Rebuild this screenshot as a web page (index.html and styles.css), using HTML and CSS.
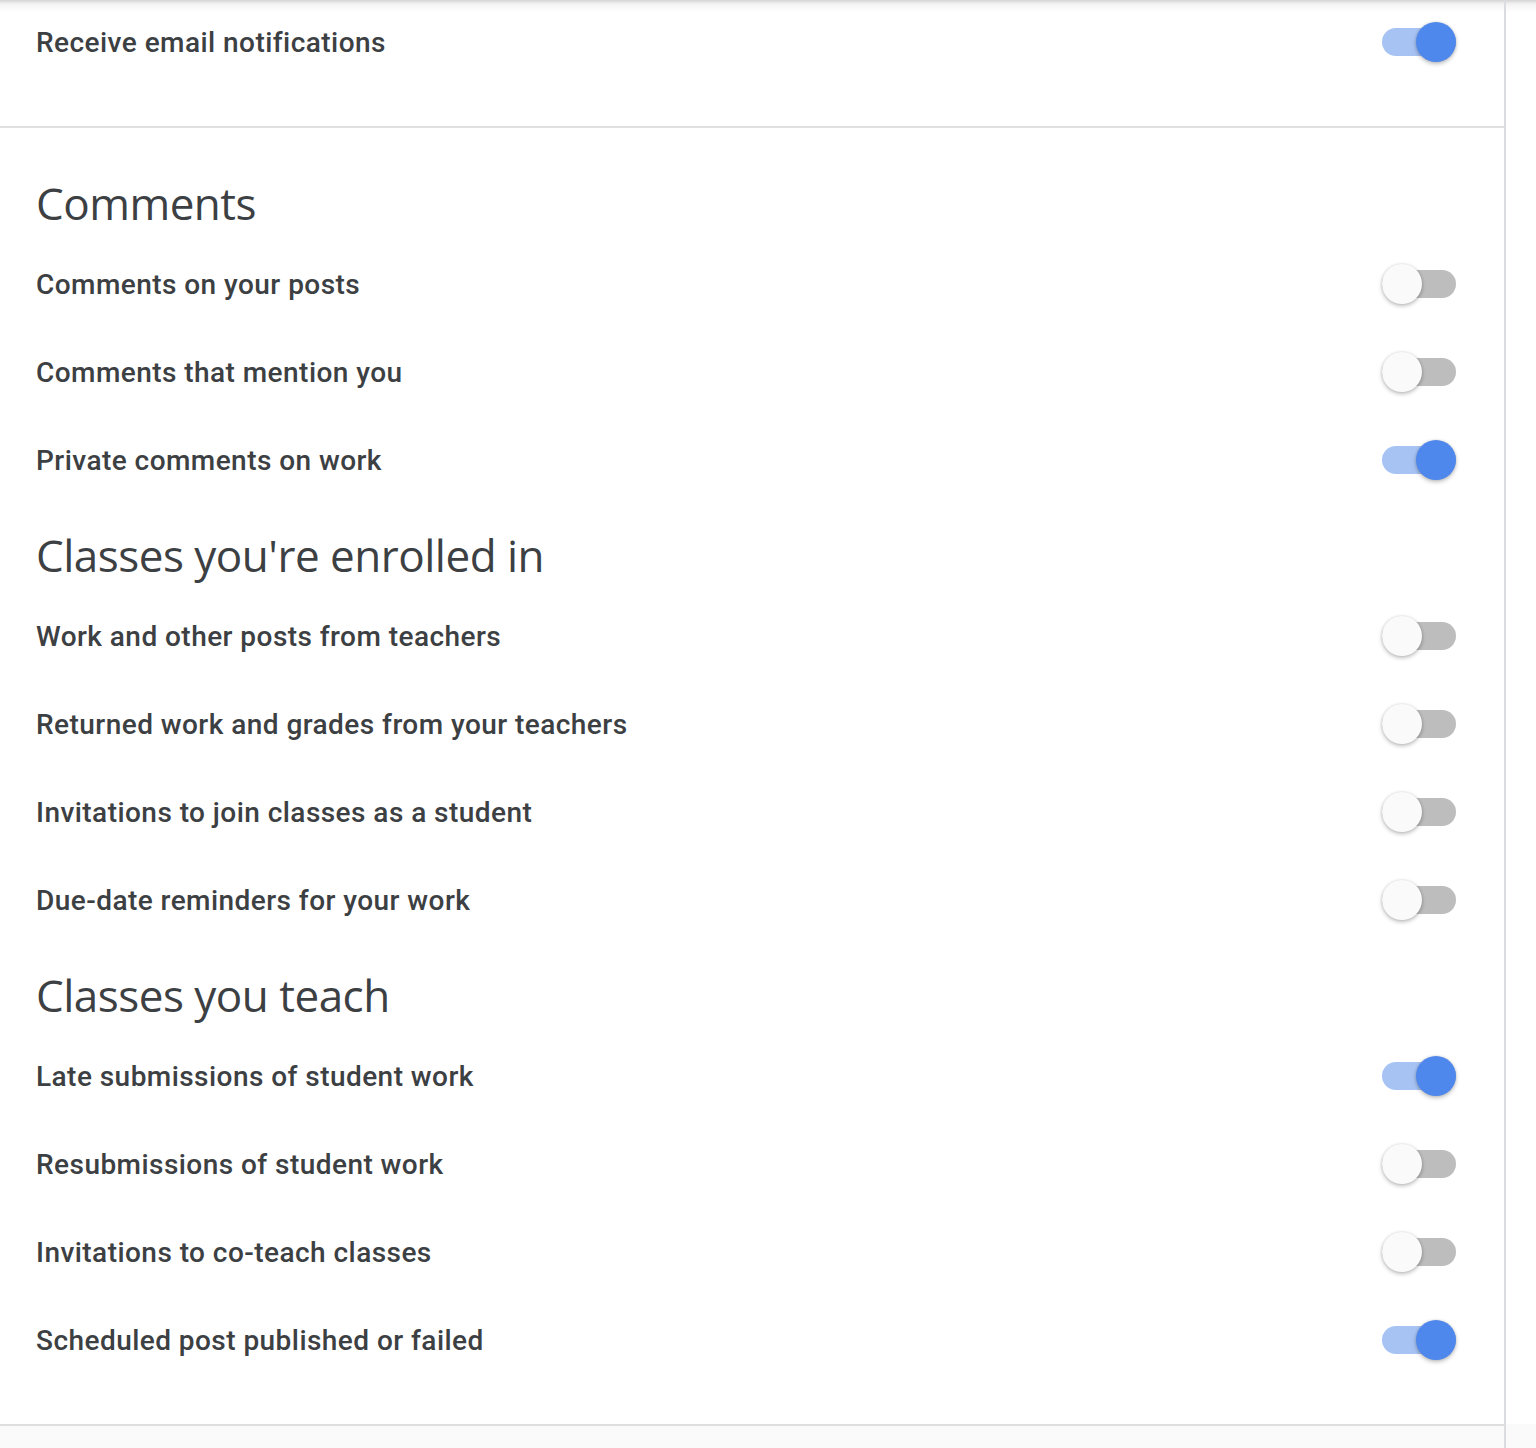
FILE: index.html
```html
<!DOCTYPE html>
<html lang="en">
<head>
<meta charset="utf-8">
<title>Notification settings</title>
<link rel="stylesheet" href="styles.css">
</head>
<body>
<div class="page">
  <div class="main-row">
    <main class="panel">
      <section class="top-section">
        <div class="row">
          <span class="label">Receive email notifications</span>
          <span class="toggle on"><span class="track"></span><span class="thumb"></span></span>
        </div>
      </section>
      <section class="groups">
        <div class="group">
          <h2 class="heading">Comments</h2>
          <div class="row">
            <span class="label">Comments on your posts</span>
            <span class="toggle"><span class="track"></span><span class="thumb"></span></span>
          </div>
          <div class="row">
            <span class="label">Comments that mention you</span>
            <span class="toggle"><span class="track"></span><span class="thumb"></span></span>
          </div>
          <div class="row">
            <span class="label">Private comments on work</span>
            <span class="toggle on"><span class="track"></span><span class="thumb"></span></span>
          </div>
        </div>
        <div class="group">
          <h2 class="heading">Classes you're enrolled in</h2>
          <div class="row">
            <span class="label">Work and other posts from teachers</span>
            <span class="toggle"><span class="track"></span><span class="thumb"></span></span>
          </div>
          <div class="row">
            <span class="label">Returned work and grades from your teachers</span>
            <span class="toggle"><span class="track"></span><span class="thumb"></span></span>
          </div>
          <div class="row">
            <span class="label">Invitations to join classes as a student</span>
            <span class="toggle"><span class="track"></span><span class="thumb"></span></span>
          </div>
          <div class="row">
            <span class="label">Due-date reminders for your work</span>
            <span class="toggle"><span class="track"></span><span class="thumb"></span></span>
          </div>
        </div>
        <div class="group">
          <h2 class="heading">Classes you teach</h2>
          <div class="row">
            <span class="label">Late submissions of student work</span>
            <span class="toggle on"><span class="track"></span><span class="thumb"></span></span>
          </div>
          <div class="row">
            <span class="label">Resubmissions of student work</span>
            <span class="toggle"><span class="track"></span><span class="thumb"></span></span>
          </div>
          <div class="row">
            <span class="label">Invitations to co-teach classes</span>
            <span class="toggle"><span class="track"></span><span class="thumb"></span></span>
          </div>
          <div class="row">
            <span class="label">Scheduled post published or failed</span>
            <span class="toggle on"><span class="track"></span><span class="thumb"></span></span>
          </div>
        </div>
      </section>
    </main>
    <div class="side"></div>
  </div>
  <div class="bottom-row">
    <div class="bottom-panel"></div>
    <div class="bottom-side"></div>
  </div>
</div>
</body>
</html>
```
FILE: styles.css
```css
html, body {
  margin: 0;
  padding: 0;
}
body {
  background: #ffffff;
  font-family: Roboto, "Liberation Sans", Arial, sans-serif;
  color: #3c4043;
}
.page {
  display: flex;
  flex-direction: column;
  min-height: 1448px;
  background: linear-gradient(#d4d4d6 0px, #f3f3f4 4px, #ffffff 12px);
}
.main-row {
  display: flex;
}
.panel {
  width: 1504px;
  border-right: 2px solid #dadce0;
  flex: none;
}
.side {
  flex: 1;
}
.top-section {
  padding-bottom: 42px;
  border-bottom: 2px solid #e0e0e0;
}
.top-section .row {
  height: 84px;
}
.groups {
  padding-top: 24px;
  padding-bottom: 40px;
}
.heading {
  margin: 25px 0 11px 0;
  padding-left: 36px;
  height: 52px;
  line-height: 52px;
  font-family: "Open Sans", "Noto Sans", sans-serif;
  font-weight: 400;
  font-size: 44px;
  letter-spacing: -0.5px;
  color: #3c4043;
}
.row {
  height: 88px;
  display: flex;
  align-items: center;
  justify-content: space-between;
  padding-left: 36px;
  padding-right: 48px;
}
.label {
  font-family: Roboto, "Liberation Sans", sans-serif;
  font-weight: 500;
  font-size: 28px;
  letter-spacing: 0.45px;
  color: #3c4043;
}
.toggle {
  position: relative;
  width: 74px;
  height: 40px;
  display: flex;
  align-items: center;
  flex: none;
}
.track {
  width: 74px;
  height: 28px;
  border-radius: 14px;
  background: #bdbdbd;
}
.thumb {
  position: absolute;
  top: 0;
  left: 0;
  width: 40px;
  height: 40px;
  border-radius: 50%;
  background: #fafafa;
  box-shadow: 0 2px 4px rgba(0, 0, 0, 0.24), 0 0 3px rgba(0, 0, 0, 0.12);
}
.toggle.on .track {
  background: #a7c3f4;
}
.toggle.on .thumb {
  left: 34px;
  background: #4e88ec;
}
.bottom-row {
  display: flex;
  flex: 1;
}
.bottom-panel {
  width: 1504px;
  flex: none;
  border-top: 2px solid #dedede;
  border-right: 2px solid #dadce0;
  background: #fafafa;
}
.bottom-side {
  flex: 1;
  background: #fafafa;
}
```
